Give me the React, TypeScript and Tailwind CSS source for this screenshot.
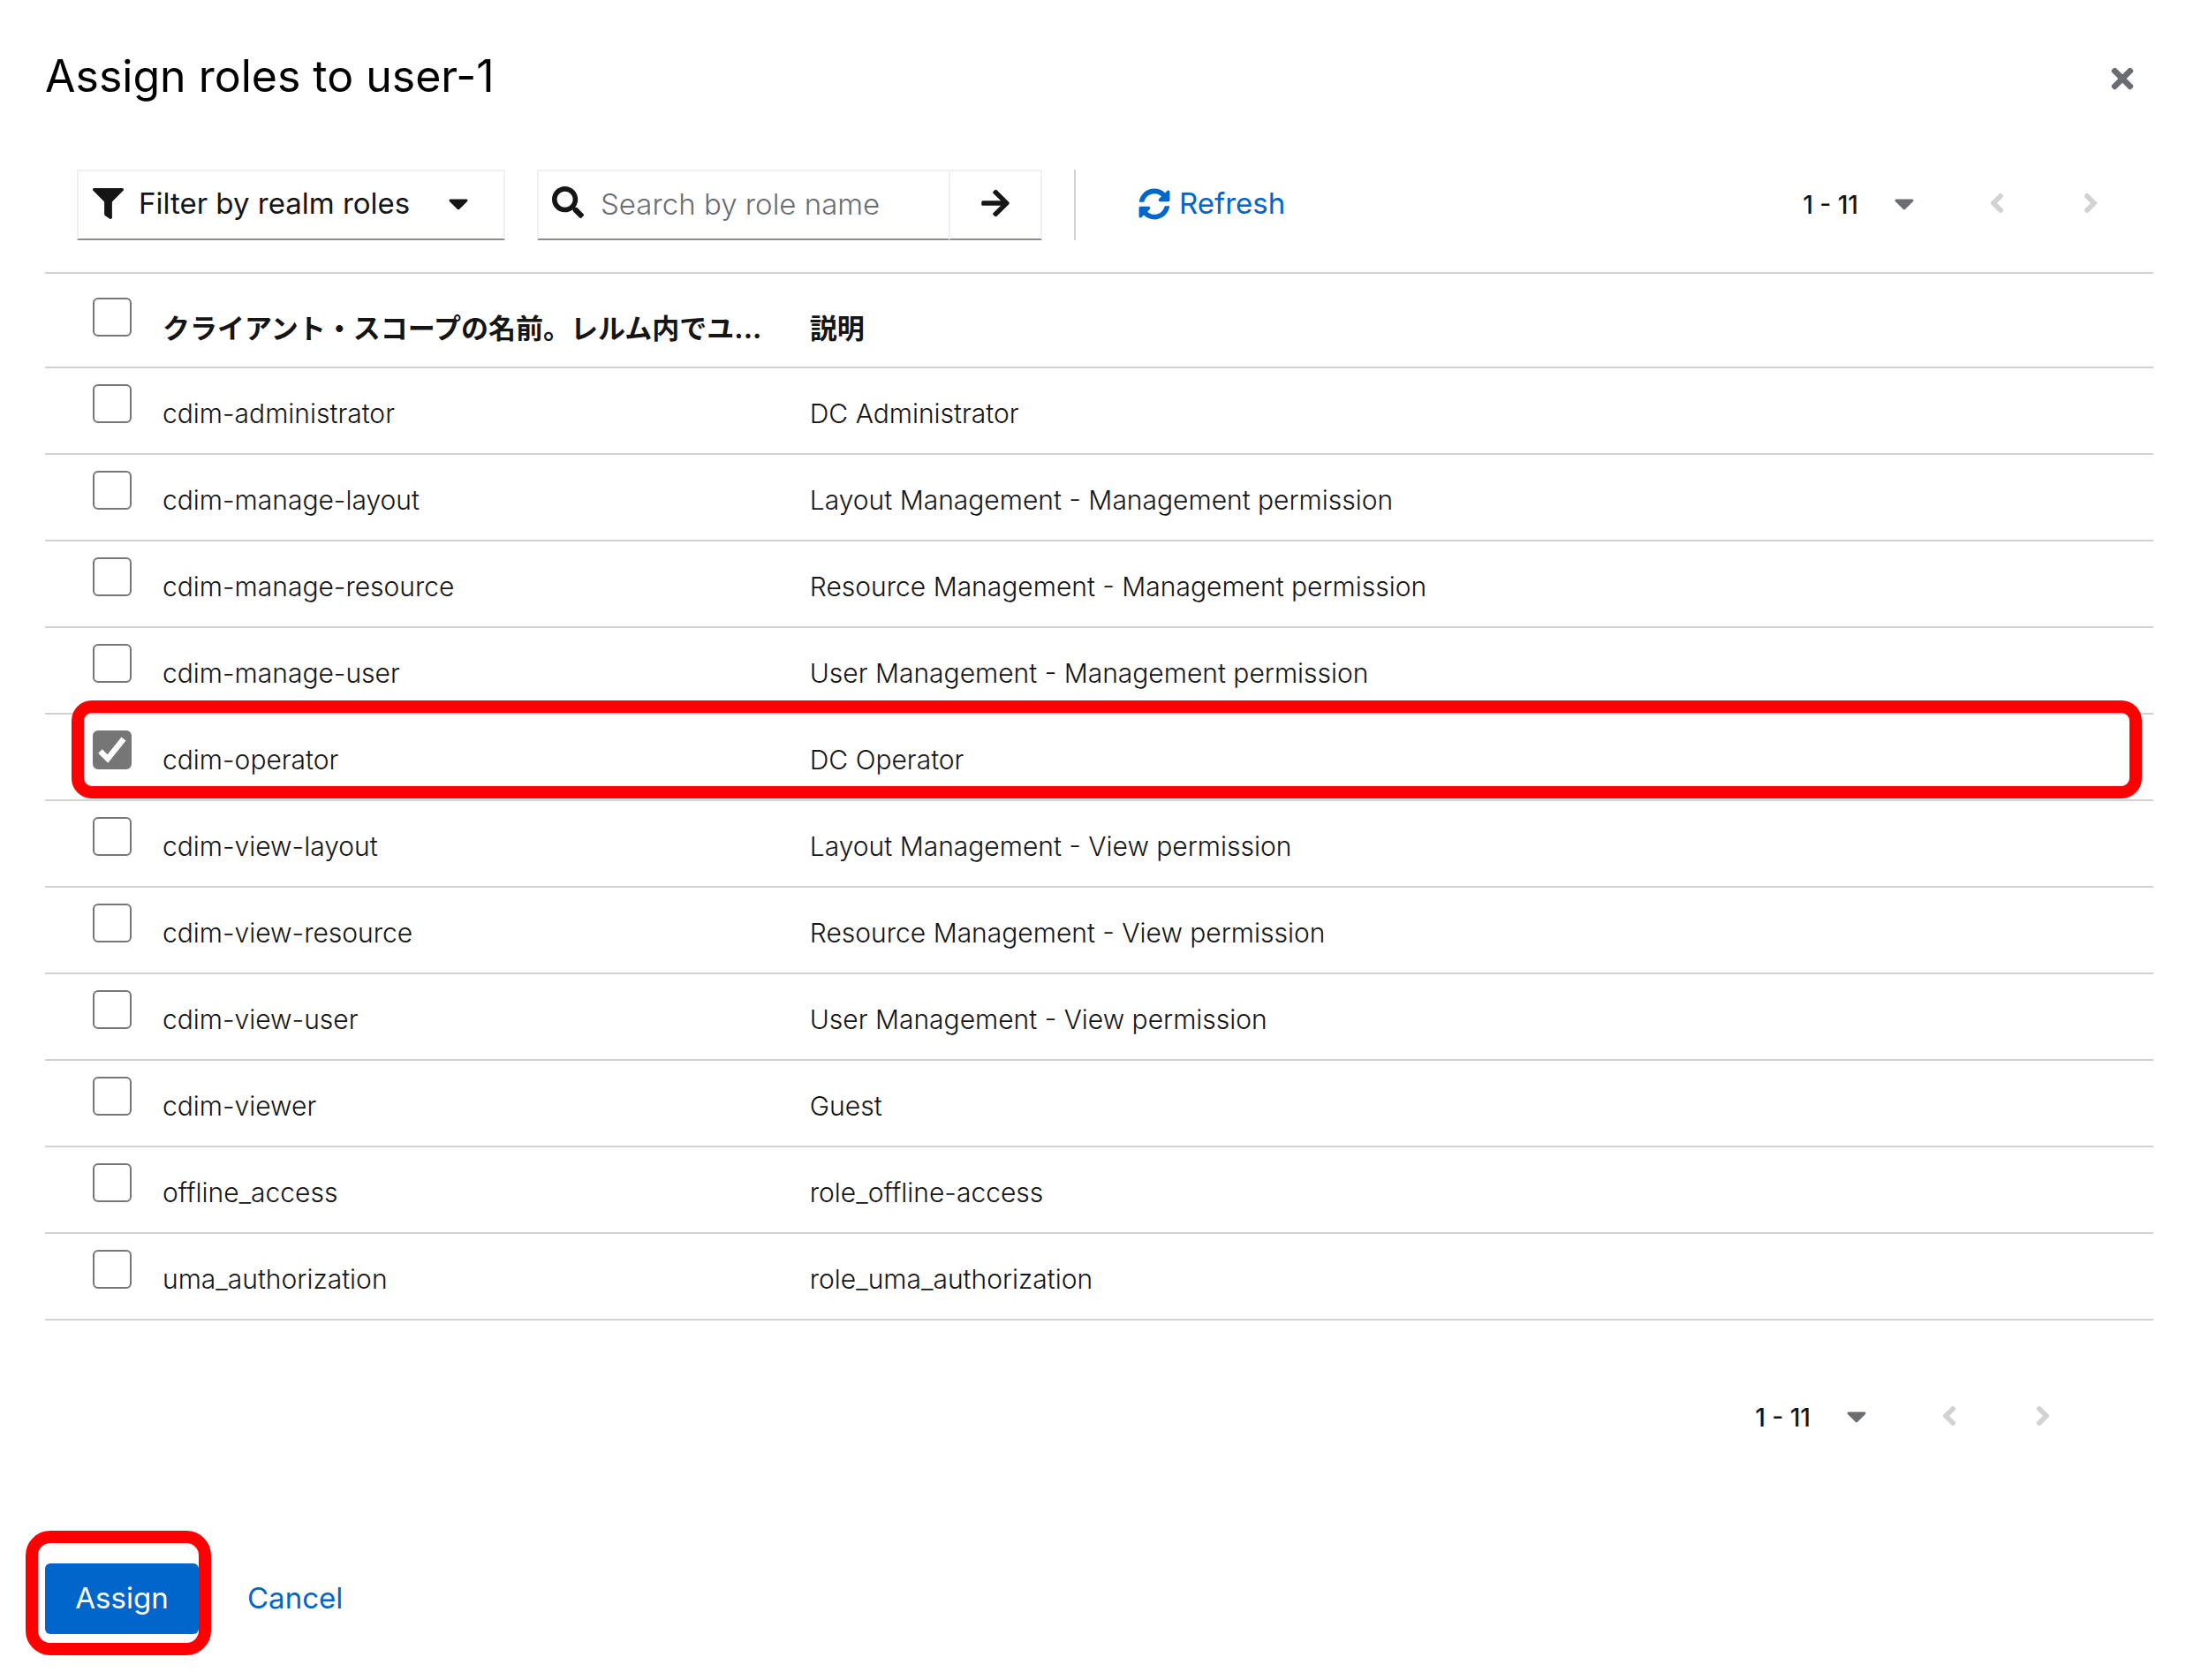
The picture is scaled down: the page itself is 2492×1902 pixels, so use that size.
import { useState } from 'react';
import {
  FaAngleLeft,
  FaAngleRight,
  FaArrowRight,
  FaCaretDown,
  FaFilter,
  FaSearch,
  FaSyncAlt,
  FaTimes,
} from 'react-icons/fa';

type Role = { name: string; description: string };

const ROLES: Role[] = [
  { name: 'cdim-administrator', description: 'DC Administrator' },
  { name: 'cdim-manage-layout', description: 'Layout Management - Management permission' },
  { name: 'cdim-manage-resource', description: 'Resource Management - Management permission' },
  { name: 'cdim-manage-user', description: 'User Management - Management permission' },
  { name: 'cdim-operator', description: 'DC Operator' },
  { name: 'cdim-view-layout', description: 'Layout Management - View permission' },
  { name: 'cdim-view-resource', description: 'Resource Management - View permission' },
  { name: 'cdim-view-user', description: 'User Management - View permission' },
  { name: 'cdim-viewer', description: 'Guest' },
  { name: 'offline_access', description: 'role_offline-access' },
  { name: 'uma_authorization', description: 'role_uma_authorization' },
];

const HIGHLIGHTED_ROLE = 'cdim-operator';

function Checkbox({ label, checked, onChange }: { label: string; checked: boolean; onChange: () => void }) {
  return (
    <span className="relative block size-11">
      <input
        type="checkbox"
        aria-label={label}
        checked={checked}
        onChange={onChange}
        className="block size-11 appearance-none rounded-md border-2 border-[#767676] bg-white checked:bg-[#767676]"
      />
      {checked && (
        <svg viewBox="0 0 44 44" className="pointer-events-none absolute inset-0 size-11" aria-hidden="true">
          <path d="M8.5 23.5L17 32L35 9.5" fill="none" stroke="white" strokeWidth="6.5" />
        </svg>
      )}
    </span>
  );
}

function Pagination({ label, className }: { label: string; className: string }) {
  return (
    <nav aria-label={label} className={className}>
      <span className="text-[28px] font-medium">1 - 11</span>
      <button type="button" aria-label="Items per page" className="flex h-20 w-[104px] items-center justify-center pb-1 text-[#6a6e73]">
        <FaCaretDown className="h-9 w-auto" />
      </button>
      <button type="button" aria-label="Previous page" disabled className="flex h-20 w-[106px] items-center justify-center pb-1 text-[#d2d2d2]">
        <FaAngleLeft className="h-9 w-auto" />
      </button>
      <button type="button" aria-label="Next page" disabled className="flex h-20 w-[106px] items-center justify-center pb-1 text-[#d2d2d2]">
        <FaAngleRight className="h-9 w-auto" />
      </button>
    </nav>
  );
}

export default function App() {
  const [selected, setSelected] = useState<string[]>([HIGHLIGHTED_ROLE]);
  const allSelected = selected.length === ROLES.length;
  const toggle = (name: string) =>
    setSelected((current) => (current.includes(name) ? current.filter((n) => n !== name) : [...current, name]));

  return (
    <main className="bg-white pt-[54px] pr-[54px] pb-[51px] pl-[51px] font-['Inter','Noto_Sans_CJK_JP',sans-serif] text-[#151515]">
      <header className="flex items-end justify-between">
        <h1 className="text-[50px] leading-[64px] text-black">Assign roles to user-1</h1>
        <button type="button" aria-label="Close" className="flex h-[58px] w-[70px] items-center justify-center text-[#6a6e73]">
          <FaTimes className="h-9 w-auto" />
        </button>
      </header>

      <div className="mt-[74px] flex h-20 items-center gap-9 pl-9 text-[33px]">
        <div className="relative h-20 w-[485px]">
          <FaFilter className="pointer-events-none absolute top-[21px] left-[18px] size-[35px]" />
          <select
            aria-label="Filter type"
            className="h-20 w-full appearance-none border-2 border-[#f0f0f0] border-b-[#8a8d90] bg-white pb-0.5 pl-[68px]"
          >
            <option>Filter by realm roles</option>
            <option>Filter by clients</option>
          </select>
          <FaCaretDown className="pointer-events-none absolute top-5 right-[35px] h-9 w-auto" />
        </div>

        <form className="flex h-20 w-[572px]" onSubmit={(e) => e.preventDefault()}>
          <div className="relative min-w-0 flex-1">
            <FaSearch className="pointer-events-none absolute top-[19px] left-[17px] size-9" />
            <input
              type="search"
              aria-label="Search by role name"
              placeholder="Search by role name"
              className="h-20 w-full border-2 border-r-0 border-[#f0f0f0] border-b-[#8a8d90] pb-0.5 pl-[70px] font-light placeholder:text-[#6a6e73]"
            />
          </div>
          <button
            type="submit"
            aria-label="Search"
            className="flex w-[106px] items-center justify-center border-2 border-[#f0f0f0] border-b-[#8a8d90] pb-1"
          >
            <FaArrowRight className="h-9 w-auto" />
          </button>
        </form>

        <div className="h-20 w-0.5 bg-[#d2d2d2]" />

        <button type="button" className="flex h-20 items-center gap-2.5 pb-0.5 pl-[35px] text-[#0066cc]">
          <FaSyncAlt className="size-9" />
          Refresh
        </button>

        <Pagination label="Pagination top" className="ml-auto flex items-center pr-[18px]" />
      </div>

      <table className="mt-9 w-full table-fixed border-collapse border-t-2 border-[#d2d2d2] text-left">
        <colgroup>
          <col className="w-[133px]" />
          <col className="w-[30.7%]" />
          <col />
        </colgroup>
        <thead>
          <tr className="h-[107px] border-b-2 border-[#d2d2d2] align-top text-[31px] leading-10 font-bold">
            <td className="pt-[27px] pl-[54px]">
              <Checkbox
                label="Select all rows"
                checked={allSelected}
                onChange={() => setSelected(allSelected ? [] : ROLES.map((r) => r.name))}
              />
            </td>
            <th scope="col" className="pt-[42px] whitespace-nowrap">
              クライアント・スコープの名前。レルム内でユ...
            </th>
            <th scope="col" className="pt-[42px]">説明</th>
          </tr>
        </thead>
        <tbody>
          {ROLES.map((role) => (
            <tr key={role.name} className="relative h-[98px] border-b-2 border-[#d2d2d2] align-top text-[30px] leading-10 font-light">
              <td className="pt-[18px] pl-[54px]">
                <Checkbox
                  label={`Select ${role.name}`}
                  checked={selected.includes(role.name)}
                  onChange={() => toggle(role.name)}
                />
                {role.name === HIGHLIGHTED_ROLE && (
                  <span className="pointer-events-none absolute -top-[15px] right-[13px] left-[30px] h-[111px] rounded-[23px] border-[14px] border-[#ff0000]" />
                )}
              </td>
              <td className="pt-[31px]">{role.name}</td>
              <td className="pt-[31px]">{role.description}</td>
            </tr>
          ))}
        </tbody>
      </table>

      <Pagination label="Pagination bottom" className="mt-[70px] flex items-center justify-end pr-[72px]" />

      <footer className="mt-[125px] flex gap-5 text-[33px]">
        <div className="relative">
          <button type="button" className="h-20 w-[174px] rounded-md bg-[#0066cc] text-white">
            Assign
          </button>
          <span className="pointer-events-none absolute -top-[37px] -right-[14px] -bottom-[24px] -left-[22px] rounded-[28px] border-[14px] border-[#ff0000]" />
        </div>
        <button type="button" className="h-20 px-[35px] text-[#0066cc]">
          Cancel
        </button>
      </footer>
    </main>
  );
}
